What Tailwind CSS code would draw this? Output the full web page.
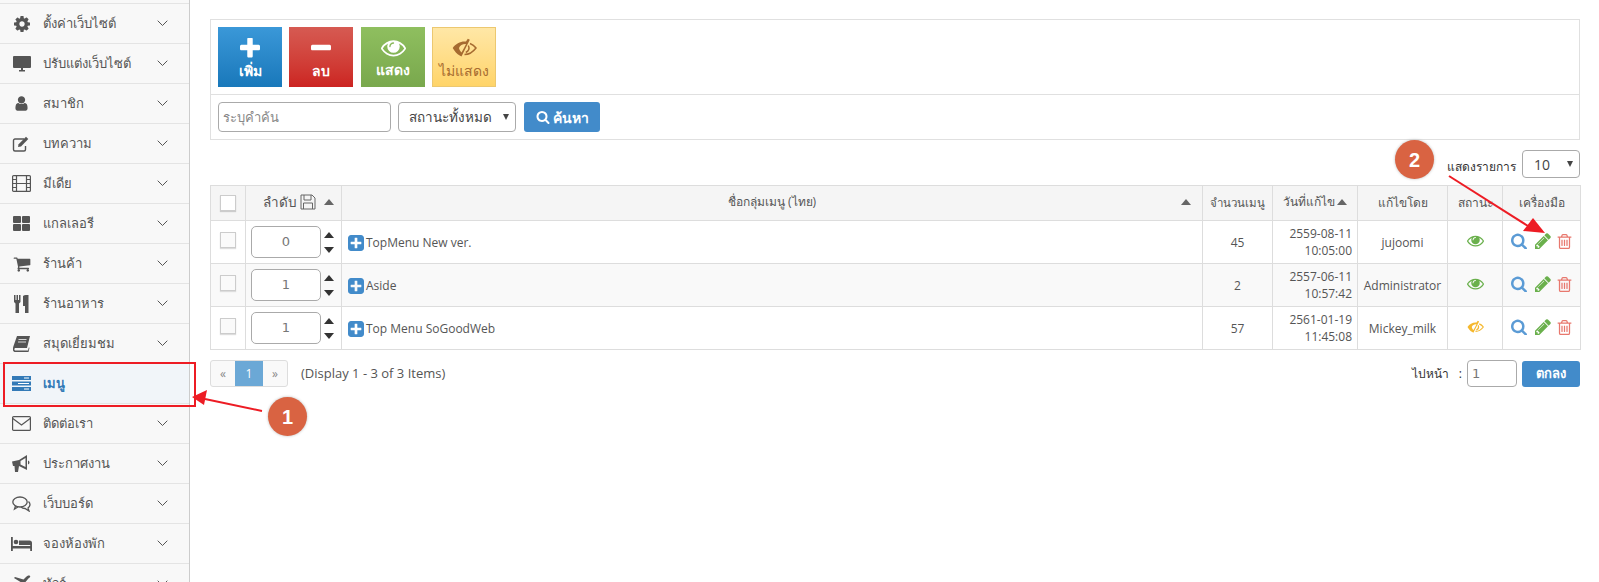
<!doctype html>
<html>
<head>
  <meta charset="UTF-8">
  <script src="https://cdn.jsdelivr.net/npm/@tailwindcss/browser@4"></script>
</head>
<body class="bg-white">
<div class="relative flex h-[582px] w-[1599px] overflow-hidden font-['Open_Sans','Noto_Sans',sans-serif] text-[12px] text-[#555]">

  <!-- Sidebar -->
  <aside class="w-[190px] shrink-0 h-full bg-[#f8f8f8] border-r border-[#ccc] pt-[3px] text-[13px]">
    <div class="flex h-[40px] items-center border-t border-[#e4e4e4]">
      <span class="w-[43px] flex justify-center pl-[1px]"><svg class="w-[16px] h-[16px] fill-[#555]" viewBox="128 128 1536 1536"><path d="M1152 896q0-106-75-181t-181-75-181 75-75 181 75 181 181 75 181-75 75-181zm512-109v222q0 12-8 23t-20 13l-185 28q-19 54-39 91 35 50 107 138 10 12 10 25t-9 23q-27 37-99 108t-94 71q-12 0-26-9l-138-108q-44 23-91 38-16 136-29 186-7 28-36 28h-222q-14 0-24.500-8.500t-11.500-21.500l-28-184q-49-16-90-37l-141 107q-10 9-25 9-14 0-25-11-126-114-165-168-7-10-7-23 0-12 8-23 15-21 51-66.500t54-70.500q-27-50-41-99l-183-27q-13-2-21-12.500t-8-23.500v-222q0-12 8-23t19-13l186-28q14-46 39-92-40-57-107-138-10-12-10-24 0-10 9-23 26-36 98.500-107.500t94.500-71.500q13 0 26 10l138 107q44-23 91-38 16-136 29-186 7-28 36-28h222q14 0 24.500 8.500t11.500 21.500l28 184q49 16 90 37l142-107q9-9 24-9 13 0 25 10 129 119 165 170 7 8 7 22 0 12-8 23-15 21-51 66.500t-54 70.500q26 50 41 98l183 28q13 2 21 12.500t8 23.500z"/></svg></span>
      <span class="flex-1">ตั้งค่าเว็บไซต์</span>
      <svg class="w-[11px] h-[7px] mr-[21px] stroke-[#555] fill-none" viewBox="0 0 11 7"><path d="M.7.7 5.500 5.500 10.300.7"/></svg>
    </div>
    <div class="flex h-[40px] items-center border-t border-[#e4e4e4]">
      <span class="w-[43px] flex justify-center"><svg class="w-[20px] h-[17px]" viewBox="0 0 20 17"><rect x="1" y="1" width="18" height="12" rx="1" fill="#555"/><path d="M7 15h6v1.500H7z M9 13h2v2H9z" fill="#555"/></svg></span>
      <span class="flex-1">ปรับแต่งเว็บไซต์</span>
      <svg class="w-[11px] h-[7px] mr-[21px] stroke-[#555] fill-none" viewBox="0 0 11 7"><path d="M.7.7 5.500 5.500 10.300.7"/></svg>
    </div>
    <div class="flex h-[40px] items-center border-t border-[#e4e4e4]">
      <span class="w-[43px] flex justify-center"><svg class="w-[17px] h-[17px] fill-[#555]" viewBox="0 0 1792 1792"><path d="M1536 1399q0 109-62.500 187t-150.500 78h-854q-88 0-150.500-78t-62.500-187q0-85 8.500-160.500t31.500-152 58.500-131 94-89 134.500-34.500q131 128 313 128t313-128q76 0 134.500 34.500t94 89 58.500 131 31.500 152 8.500 160.500zm-256-887q0 159-112.500 271.500t-271.500 112.500-271.500-112.500-112.500-271.500 112.500-271.500 271.500-112.500 271.500 112.500 112.500 271.500z"/></svg></span>
      <span class="flex-1">สมาชิก</span>
      <svg class="w-[11px] h-[7px] mr-[21px] stroke-[#555] fill-none" viewBox="0 0 11 7"><path d="M.7.7 5.500 5.500 10.300.7"/></svg>
    </div>
    <div class="flex h-[40px] items-center border-t border-[#e4e4e4]">
      <span class="w-[43px] flex justify-center"><svg class="w-[19px] h-[16px]" viewBox="0 0 19 16"><path d="M12 3H3a1.500 1.500 0 0 0-1.500 1.500v9A1.500 1.500 0 0 0 3 15h9a1.500 1.500 0 0 0 1.500-1.500V10" fill="none" stroke="#555" stroke-width="1.400"/><path d="M6 11l.6-2.800L14 .8l2.300 2.300L9 10.500z" fill="#555"/></svg></span>
      <span class="flex-1">บทความ</span>
      <svg class="w-[11px] h-[7px] mr-[21px] stroke-[#555] fill-none" viewBox="0 0 11 7"><path d="M.7.7 5.500 5.500 10.300.7"/></svg>
    </div>
    <div class="flex h-[40px] items-center border-t border-[#e4e4e4]">
      <span class="w-[43px] flex justify-center"><svg class="w-[19px] h-[17px]" viewBox="0 0 19 17"><rect x=".6" y=".6" width="17.800" height="15.800" rx="1" fill="none" stroke="#555" stroke-width="1.200"/><path d="M4.500 .6v15.800M14.500 .6v15.800M.6 4.500h3.900M.6 8.500h3.900M.6 12.500h3.900M14.500 4.500h3.900M14.500 8.500h3.900M14.500 12.500h3.900M4.500 8.500h10" stroke="#555" stroke-width="1.200" fill="none"/></svg></span>
      <span class="flex-1">มีเดีย</span>
      <svg class="w-[11px] h-[7px] mr-[21px] stroke-[#555] fill-none" viewBox="0 0 11 7"><path d="M.7.7 5.500 5.500 10.300.7"/></svg>
    </div>
    <div class="flex h-[40px] items-center border-t border-[#e4e4e4]">
      <span class="w-[43px] flex justify-center"><svg class="w-[17px] h-[15px]" viewBox="0 0 17 15" fill="#555"><rect width="8" height="7" rx="1"/><rect x="9" width="8" height="7" rx="1"/><rect y="8" width="8" height="7" rx="1"/><rect x="9" y="8" width="8" height="7" rx="1"/></svg></span>
      <span class="flex-1">แกลเลอรี</span>
      <svg class="w-[11px] h-[7px] mr-[21px] stroke-[#555] fill-none" viewBox="0 0 11 7"><path d="M.7.7 5.500 5.500 10.300.7"/></svg>
    </div>
    <div class="flex h-[40px] items-center border-t border-[#e4e4e4]">
      <span class="w-[43px] flex justify-center"><svg class="w-[18px] h-[18px] fill-[#555]" viewBox="0 0 1792 1792"><path d="M704 1536q0 52-38 90t-90 38-90-38-38-90 38-90 90-38 90 38 38 90zm896 0q0 52-38 90t-90 38-90-38-38-90 38-90 90-38 90 38 38 90zm128-1088v512q0 24-16.500 42.500t-40.500 21.500l-1044 122q13 60 13 70 0 16-24 64h920q26 0 45 19t19 45-19 45-45 19h-1024q-26 0-45-19t-19-45q0-11 8-31.500t16-36 21.500-40 15.500-29.500l-177-823h-204q-26 0-45-19t-19-45 19-45 45-19h256q16 0 28.500 6.500t19.500 15.500 13 24.500 8 26 5.500 29.500 4.500 26h1201q26 0 45 19t19 45z"/></svg></span>
      <span class="flex-1">ร้านค้า</span>
      <svg class="w-[11px] h-[7px] mr-[21px] stroke-[#555] fill-none" viewBox="0 0 11 7"><path d="M.7.7 5.500 5.500 10.300.7"/></svg>
    </div>
    <div class="flex h-[40px] items-center border-t border-[#e4e4e4]">
      <span class="w-[43px] flex justify-center"><svg class="w-[15px] h-[18px]" viewBox="0 0 15 18" fill="#555"><path d="M0 0h1.500v5h1V0h1.500v5h1V0H6.500v7L5 8.500V18H1.500V8.500L0 7z"/><path d="M9 1c2-1.500 5.500-1 5.500-1v18H11v-7H9z"/></svg></span>
      <span class="flex-1">ร้านอาหาร</span>
      <svg class="w-[11px] h-[7px] mr-[21px] stroke-[#555] fill-none" viewBox="0 0 11 7"><path d="M.7.7 5.500 5.500 10.300.7"/></svg>
    </div>
    <div class="flex h-[40px] items-center border-t border-[#e4e4e4]">
      <span class="w-[43px] flex justify-center"><svg class="w-[18px] h-[16px]" viewBox="0 0 18 16"><path d="M4 0h13l-3 12H2.500C1 12 1 14.500 2.500 14.500H15l.8-3 .7.300-1 4.200H2.500C-.500 16-.500 13 .5 10z" fill="#555"/><path d="M5.500 3.500h8M5 6h8" stroke="#f8f8f8" stroke-width=".8"/></svg></span>
      <span class="flex-1">สมุดเยี่ยมชม</span>
      <svg class="w-[11px] h-[7px] mr-[21px] stroke-[#555] fill-none" viewBox="0 0 11 7"><path d="M.7.7 5.500 5.500 10.300.7"/></svg>
    </div>
    <div class="flex h-[40px] items-center border-t border-[#e4e4e4] bg-[#f1f5f9] text-[#337ab7] font-bold">
      <span class="w-[43px] flex justify-center"><svg class="w-[19px] h-[15px]" viewBox="0 0 19 15" fill="#337ab7"><rect width="19" height="4"/><rect y="5.500" width="19" height="4"/><rect y="11" width="19" height="4"/><path d="M12 1.500h5v1h-5zM6 7h11v1H6zM12 12.500h5v1h-5z" fill="#fff"/></svg></span>
      <span class="flex-1">เมนู</span>
    </div>
    <div class="flex h-[40px] items-center border-t border-[#e4e4e4]">
      <span class="w-[43px] flex justify-center"><svg class="w-[19px] h-[15px]" viewBox="0 0 19 15" fill="none" stroke="#555" stroke-width="1.200"><rect x=".6" y=".6" width="17.800" height="13.800" rx="1"/><path d="M.8 2.500 9.500 9l8.700-6.500"/></svg></span>
      <span class="flex-1">ติดต่อเรา</span>
      <svg class="w-[11px] h-[7px] mr-[21px] stroke-[#555] fill-none" viewBox="0 0 11 7"><path d="M.7.7 5.500 5.500 10.300.7"/></svg>
    </div>
    <div class="flex h-[40px] items-center border-t border-[#e4e4e4]">
      <span class="w-[43px] flex justify-center"><svg class="w-[19px] h-[17px]" viewBox="0 0 19 17" fill="#555"><path d="M0 6.500 7 5l8-5v15l-8-4-1 6H3l-.5-6H1z"/><path d="M13.500 3 8.500 6v3.500l5 2.500z" fill="#f8f8f8"/><path d="M16 5.500c2 .8 2 3.200 0 4z"/></svg></span>
      <span class="flex-1">ประกาศงาน</span>
      <svg class="w-[11px] h-[7px] mr-[21px] stroke-[#555] fill-none" viewBox="0 0 11 7"><path d="M.7.7 5.500 5.500 10.300.7"/></svg>
    </div>
    <div class="flex h-[40px] items-center border-t border-[#e4e4e4]">
      <span class="w-[43px] flex justify-center"><svg class="w-[19px] h-[16px]" viewBox="0 0 19 16" fill="none" stroke="#555" stroke-width="1.300"><ellipse cx="8" cy="6" rx="7.200" ry="5"/><path d="M3.500 10 2.500 13l3.500-2M16.500 5.500c2.500 2.500 1.500 5-.5 6.500l1 3-4-2.500c-1.500 0-3-.5-4-1.500" /></svg></span>
      <span class="flex-1">เว็บบอร์ด</span>
      <svg class="w-[11px] h-[7px] mr-[21px] stroke-[#555] fill-none" viewBox="0 0 11 7"><path d="M.7.7 5.500 5.500 10.300.7"/></svg>
    </div>
    <div class="flex h-[40px] items-center border-t border-[#e4e4e4]">
      <span class="w-[43px] flex justify-center"><svg class="w-[21px] h-[14px]" viewBox="0 0 21 14" fill="#555"><rect width="1.800" height="14"/><rect x="19.200" y="6" width="1.800" height="8"/><rect y="9" width="21" height="2.500"/><circle cx="5" cy="5" r="2.300"/><path d="M8 3.500h10.500a2.500 2.500 0 0 1 2.500 2.500v2H8z"/></svg></span>
      <span class="flex-1">จองห้องพัก</span>
      <svg class="w-[11px] h-[7px] mr-[21px] stroke-[#555] fill-none" viewBox="0 0 11 7"><path d="M.7.7 5.500 5.500 10.300.7"/></svg>
    </div>
    <div class="flex h-[40px] items-center border-t border-[#e4e4e4]">
      <span class="w-[43px] flex justify-center"><svg class="w-[18px] h-[18px]" viewBox="0 0 18 18" fill="#555"><path d="M17 1c-1-1-3 0-4 1l-2.500 2.500L2 2 1 3l6.500 4L4.500 10H2l-1 1 3 2 2 3 1-1v-2.500L10 10l4 6.500 1-1-2.500-8.500L15 4c1-1 3-2 2-3z"/></svg></span>
      <span class="flex-1">ทัวร์</span>
      <svg class="w-[11px] h-[7px] mr-[21px] stroke-[#555] fill-none" viewBox="0 0 11 7"><path d="M.7.7 5.500 5.500 10.300.7"/></svg>
    </div>
  </aside>

  <!-- Main -->
  <main class="w-[1370px] ml-[20px] pt-[19px]">
    <section class="border border-[#e0e0e0]">
      <div class="flex px-[7px] py-[7px] h-[75px] border-b border-[#e0e0e0]">
        <button class="w-[64px] h-[60px] flex flex-col items-center text-white font-bold text-[14px] bg-gradient-to-b from-[#3a98d8] to-[#1878ba]">
          <svg class="w-[20px] h-[20px] mt-[11px] fill-white" viewBox="192 160 1408 1408"><path d="M1600 736v192q0 40-28 68t-68 28h-416v416q0 40-28 68t-68 28h-192q-40 0-68-28t-28-68v-416h-416q-40 0-68-28t-28-68v-192q0-40 28-68t68-28h416v-416q0-40 28-68t68-28h192q40 0 68 28t28 68v416h416q40 0 68 28t28 68z"/></svg>
          <span class="mt-[2px]">เพิ่ม</span>
        </button>
        <button class="ml-[7px] w-[64px] h-[60px] flex flex-col items-center text-white font-bold text-[14px] bg-gradient-to-b from-[#d65a52] to-[#cc2321]">
          <svg class="w-[20px] h-[20px] mt-[11px] fill-white" viewBox="192 160 1408 1408"><path d="M1600 736v192q0 40-28 68t-68 28h-1216q-40 0-68-28t-28-68v-192q0-40 28-68t68-28h1216q40 0 68 28t28 68z"/></svg>
          <span class="mt-[2px]">ลบ</span>
        </button>
        <button class="ml-[8px] w-[64px] h-[60px] flex flex-col items-center text-white font-bold text-[14px] bg-gradient-to-b from-[#8fbf5f] to-[#79a84d]">
          <svg class="w-[25px] h-[25px] mt-[8px] fill-white" viewBox="0 0 1792 1792"><path d="M1664 960q-152-236-381-353 61 104 61 225 0 185-131.500 316.500t-316.500 131.500-316.500-131.500-131.500-316.500q0-121 61-225-229 117-381 353 133 205 333.500 326.500t434.500 121.500 434.500-121.500 333.500-326.500zm-720-384q0-20-14-34t-34-14q-125 0-214.500 89.500t-89.500 214.500q0 20 14 34t34 14 34-14 14-34q0-86 61-147t147-61q20 0 34-14t14-34zm848 384q0 34-20 69-140 230-376.500 368.500t-499.500 138.500-499.500-139-376.500-368q-20-35-20-69t20-69q140-229 376.500-368t499.500-139 499.500 139 376.500 368q20 35 20 69z"/></svg>
          <span class="mt-[-1px]">แสดง</span>
        </button>
        <button class="ml-[7px] w-[64px] h-[60px] flex flex-col items-center text-[#a66b30] text-[14px] font-medium border border-[#ecc870] bg-gradient-to-b from-[#ffe7a6] to-[#ffd468]">
          <svg class="w-[25px] h-[20px] mt-[10px]" viewBox="0 0 25 20" fill="none" stroke="#a66b30"><path d="M.7 10C3.500 6 8 3.500 12.500 3.500H14L15.800 .8l2 1L9.500 18.500l-1.800-1C5 16.500 2.500 13 .7 10zM7 10c.5 2 1.300 3.300 2.500 4.500L12 10 14 6c-3-.3-6 1.300-7 4z" fill="#a66b30" fill-rule="evenodd" stroke="none"/><path d="M18 5.500c2.500 1 4.700 2.800 6 4.500-3 4-7 6.500-11.500 6.500M16.300 7.500c1.500 3 .5 5.500-2.500 7" stroke-width="1.500"/></svg>
          <span class="mt-[2px]">ไม่แสดง</span>
        </button>
      </div>
      <div class="flex items-center h-[44px] px-[7px]">
        <input class="w-[173px] h-[30px] px-[4px] border border-[#aaa] rounded-[4px] text-[13px] placeholder:text-[#888]" placeholder="ระบุคำค้น">
        <div class="relative w-[118px] h-[30px] ml-[7px] border border-[#aaa] rounded-[4px] flex items-center pl-[10px] text-[13.500px] text-[#444]">สถานะทั้งหมด<span class="absolute right-[6px] top-[11px] w-0 h-0 border-x-[3.500px] border-x-transparent border-t-[6px] border-t-[#444]"></span></div>
        <button class="ml-[8px] w-[76px] h-[30px] rounded-[3px] bg-[#428bca] text-white font-bold text-[14px] flex items-center justify-center gap-[3px]">
          <svg class="w-[14px] h-[14px] fill-white" viewBox="0 0 1792 1792"><path d="M1216 832q0-185-131.500-316.500t-316.500-131.500-316.500 131.500-131.500 316.500 131.500 316.500 316.500 131.500 316.500-131.500 131.500-316.500zm512 832q0 52-38 90t-90 38q-54 0-90-38l-343-342q-179 124-399 124-143 0-273.500-55.500t-225-150-150-225-55.500-273.500 55.500-273.500 150-225 225-150 273.500-55.500 273.500 55.500 225 150 150 225 55.500 273.500q0 220-124 399l343 343q37 37 37 90z"/></svg>ค้นหา
        </button>
      </div>
    </section>

    <div class="flex justify-end items-center h-[45px] pt-[10px] pb-[7px]">
      <span class="text-[12px] text-[#333] mr-[6px] mt-[5px]">แสดงรายการ</span>
      <div class="relative w-[58px] h-[28px] border border-[#aaa] rounded-[4px] flex items-center pl-[11px] text-[14px] text-[#444]">10<span class="absolute right-[6px] top-[10px] w-0 h-0 border-x-[3.500px] border-x-transparent border-t-[6px] border-t-[#444]"></span></div>
    </div>

    <table class="table-fixed w-[1370px] border-collapse border border-[#ddd]">
      <colgroup><col class="w-[35px]"><col class="w-[96px]"><col class="w-[861px]"><col class="w-[70px]"><col class="w-[85px]"><col class="w-[90px]"><col class="w-[55px]"><col class="w-[78px]"></colgroup>
      <thead class="bg-[#f5f5f5]">
        <tr class="h-[35px]">
          <th class="border border-[#ddd] font-medium"><span class="block w-[16px] h-[16px] mx-auto border border-[#ccc] bg-white shadow-[0_1px_1px_#ccc]"></span></th>
          <th class="border border-[#ddd] font-medium">
            <div class="flex items-center pl-[17px] pb-[2px] text-[13.500px]">ลำดับ<svg class="ml-[3px] w-[16px] h-[16px]" viewBox="0 0 16 16" fill="none" stroke="#666"><path d="M1 1h11l3 3v11H1zM4 1v5h7V1M3.500 15V9h9v6"/></svg><span class="ml-[8px] w-0 h-0 border-x-[5.500px] border-x-transparent border-b-[6px] border-b-[#666]"></span></div>
          </th>
          <th class="relative border border-[#ddd] font-medium"><span class="pb-[2px] block">ชื่อกลุ่มเมนู (ไทย)</span><span class="absolute right-[11px] top-[13px] w-0 h-0 border-x-[5.500px] border-x-transparent border-b-[6px] border-b-[#666]"></span></th>
          <th class="border border-[#ddd] font-medium text-[11.500px]">จำนวนเมนู</th>
          <th class="border border-[#ddd] font-medium"><div class="flex items-center justify-center gap-[2px] pb-[3px]">วันที่แก้ไข<span class="w-0 h-0 border-x-[5.500px] border-x-transparent border-b-[6px] border-b-[#666]"></span></div></th>
          <th class="border border-[#ddd] font-medium">แก้ไขโดย</th>
          <th class="border border-[#ddd] font-medium">สถานะ</th>
          <th class="border border-[#ddd] font-medium">เครื่องมือ</th>
        </tr>
      </thead>
      <tbody class="text-center">
        <tr class="h-[43px]">
          <td class="border border-[#ddd]"><span class="block w-[16px] h-[16px] mx-auto mb-[4px] border border-[#ccc] bg-[#fafafa] shadow-[0_1px_1px_#ddd]"></span></td>
          <td class="border border-[#ddd]"><div class="flex items-center pl-[5px]"><span class="w-[70px] h-[32px] border border-[#aaa] rounded-[5px] flex items-center justify-center text-[13px] font-['DejaVu_Sans',sans-serif] text-[#777]">0</span><span class="ml-[3px] flex flex-col gap-[9px]"><span class="w-0 h-0 border-x-[5.500px] border-x-transparent border-b-[6px] border-b-[#333]"></span><span class="w-0 h-0 border-x-[5.500px] border-x-transparent border-t-[6px] border-t-[#333]"></span></span></div></td>
          <td class="border border-[#ddd] text-left pl-[6px]"><div class="flex items-center gap-[2px] pt-[2px]"><svg class="w-[16px] h-[16px] fill-[#428bca]" viewBox="128 128 1536 1536"><path d="M1408 960v-128q0-26-19-45t-45-19h-320v-320q0-26-19-45t-45-19h-128q-26 0-45 19t-19 45v320h-320q-26 0-45 19t-19 45v128q0 26 19 45t45 19h320v320q0 26 19 45t45 19h128q26 0 45-19t19-45v-320h320q26 0 45-19t19-45zm256-544v960q0 119-84.500 203.500t-203.500 84.500h-960q-119 0-203.500-84.500t-84.500-203.500v-960q0-119 84.500-203.500t203.500-84.500h960q119 0 203.500 84.500t84.500 203.500z"/></svg>TopMenu New ver.</div></td>
          <td class="border border-[#ddd] pt-[2px]">45</td>
          <td class="border border-[#ddd] text-right pr-[5px] leading-[17px]">2559-08-11<br>10:05:00</td>
          <td class="border border-[#ddd] pt-[2px]">jujoomi</td>
          <td class="border border-[#ddd]"><svg class="w-[17px] h-[17px] mx-auto mb-[3px] fill-[#6ab04c]" viewBox="0 0 1792 1792"><path d="M1664 960q-152-236-381-353 61 104 61 225 0 185-131.500 316.500t-316.500 131.500-316.500-131.500-131.500-316.500q0-121 61-225-229 117-381 353 133 205 333.500 326.500t434.500 121.500 434.500-121.500 333.500-326.500zm-720-384q0-20-14-34t-34-14q-125 0-214.500 89.500t-89.500 214.500q0 20 14 34t34 14 34-14 14-34q0-86 61-147t147-61q20 0 34-14t14-34zm848 384q0 34-20 69-140 230-376.500 368.500t-499.500 138.500-499.500-139-376.500-368q-20-35-20-69t20-69q140-229 376.500-368t499.500-139 499.500 139 376.500 368q20 35 20 69z"/></svg></td>
          <td class="border border-[#ddd]"><div class="flex items-center pl-[8px] pb-[2px]">
            <svg class="w-[16px] h-[16px] fill-[#5b9bd5]" viewBox="64 64 1664 1664"><path d="M1216 832q0-185-131.500-316.500t-316.500-131.500-316.500 131.500-131.500 316.500 131.500 316.500 316.500 131.500 316.500-131.500 131.500-316.500zm512 832q0 52-38 90t-90 38q-54 0-90-38l-343-342q-179 124-399 124-143 0-273.500-55.500t-225-150-150-225-55.500-273.500 55.500-273.500 150-225 225-150 273.500-55.500 273.500 55.500 225 150 150 225 55.500 273.500q0 220-124 399l343 343q37 37 37 90z"/></svg>
            <svg class="ml-[8px] w-[16px] h-[16px] fill-[#6ab04c]" viewBox="128 128 1536 1536"><path d="M491 1536l91-91-235-235-91 91v107h128v128h107zm523-928q0-22-22-22-10 0-17 7l-542 542q-7 7-7 17 0 22 22 22 10 0 17-7l542-542q7-7 7-17zm-54-192l416 416-832 832h-416v-416zm683 96q0 53-37 90l-166 166-416-416 166-165q36-38 90-38 53 0 91 38l235 234q37 39 37 91z"/></svg>
            <svg class="ml-[6px] w-[15px] h-[15px] fill-[#e8786e]" viewBox="128 128 1536 1536"><path d="M704 736v576q0 14-9 23t-23 9h-64q-14 0-23-9t-9-23v-576q0-14 9-23t23-9h64q14 0 23 9t9 23zm256 0v576q0 14-9 23t-23 9h-64q-14 0-23-9t-9-23v-576q0-14 9-23t23-9h64q14 0 23 9t9 23zm256 0v576q0 14-9 23t-23 9h-64q-14 0-23-9t-9-23v-576q0-14 9-23t23-9h64q14 0 23 9t9 23zm128 724v-948h-896v948q0 22 7 40.500t14.500 27 10.500 8.500h832q3 0 10.500-8.500t14.500-27 7-40.500zm-672-1076h448l-48-117q-7-9-17-11h-317q-10 2-17 11zm928 32v64q0 14-9 23t-23 9h-96v948q0 83-47 143.500t-113 60.500h-832q-66 0-113-58.500t-47-141.500v-952h-96q-14 0-23-9t-9-23v-64q0-14 9-23t23-9h309l70-167q15-37 54-63t79-26h320q40 0 79 26t54 63l70 167h309q14 0 23 9t9 23z"/></svg>
          </div></td>
        </tr>
        <tr class="h-[43px] bg-[#f9f9f9]">
          <td class="border border-[#ddd]"><span class="block w-[16px] h-[16px] mx-auto mb-[4px] border border-[#ccc] bg-[#fafafa] shadow-[0_1px_1px_#ddd]"></span></td>
          <td class="border border-[#ddd]"><div class="flex items-center pl-[5px]"><span class="w-[70px] h-[32px] border border-[#aaa] rounded-[5px] bg-white flex items-center justify-center text-[13px] font-['DejaVu_Sans',sans-serif] text-[#777]">1</span><span class="ml-[3px] flex flex-col gap-[9px]"><span class="w-0 h-0 border-x-[5.500px] border-x-transparent border-b-[6px] border-b-[#333]"></span><span class="w-0 h-0 border-x-[5.500px] border-x-transparent border-t-[6px] border-t-[#333]"></span></span></div></td>
          <td class="border border-[#ddd] text-left pl-[6px]"><div class="flex items-center gap-[2px] pt-[2px]"><svg class="w-[16px] h-[16px] fill-[#428bca]" viewBox="128 128 1536 1536"><path d="M1408 960v-128q0-26-19-45t-45-19h-320v-320q0-26-19-45t-45-19h-128q-26 0-45 19t-19 45v320h-320q-26 0-45 19t-19 45v128q0 26 19 45t45 19h320v320q0 26 19 45t45 19h128q26 0 45-19t19-45v-320h320q26 0 45-19t19-45zm256-544v960q0 119-84.500 203.500t-203.500 84.500h-960q-119 0-203.500-84.500t-84.500-203.500v-960q0-119 84.500-203.500t203.500-84.500h960q119 0 203.500 84.500t84.500 203.500z"/></svg>Aside</div></td>
          <td class="border border-[#ddd] pt-[2px]">2</td>
          <td class="border border-[#ddd] text-right pr-[5px] leading-[17px]">2557-06-11<br>10:57:42</td>
          <td class="border border-[#ddd] pt-[2px]">Administrator</td>
          <td class="border border-[#ddd]"><svg class="w-[17px] h-[17px] mx-auto mb-[3px] fill-[#6ab04c]" viewBox="0 0 1792 1792"><path d="M1664 960q-152-236-381-353 61 104 61 225 0 185-131.500 316.500t-316.500 131.500-316.500-131.500-131.500-316.500q0-121 61-225-229 117-381 353 133 205 333.500 326.500t434.500 121.500 434.500-121.500 333.500-326.500zm-720-384q0-20-14-34t-34-14q-125 0-214.500 89.500t-89.500 214.500q0 20 14 34t34 14 34-14 14-34q0-86 61-147t147-61q20 0 34-14t14-34zm848 384q0 34-20 69-140 230-376.500 368.500t-499.500 138.500-499.500-139-376.500-368q-20-35-20-69t20-69q140-229 376.500-368t499.500-139 499.500 139 376.500 368q20 35 20 69z"/></svg></td>
          <td class="border border-[#ddd]"><div class="flex items-center pl-[8px] pb-[2px]">
            <svg class="w-[16px] h-[16px] fill-[#5b9bd5]" viewBox="64 64 1664 1664"><path d="M1216 832q0-185-131.500-316.500t-316.500-131.500-316.500 131.500-131.500 316.500 131.500 316.500 316.500 131.500 316.500-131.500 131.500-316.500zm512 832q0 52-38 90t-90 38q-54 0-90-38l-343-342q-179 124-399 124-143 0-273.500-55.500t-225-150-150-225-55.500-273.500 55.500-273.500 150-225 225-150 273.500-55.500 273.500 55.500 225 150 150 225 55.500 273.500q0 220-124 399l343 343q37 37 37 90z"/></svg>
            <svg class="ml-[8px] w-[16px] h-[16px] fill-[#6ab04c]" viewBox="128 128 1536 1536"><path d="M491 1536l91-91-235-235-91 91v107h128v128h107zm523-928q0-22-22-22-10 0-17 7l-542 542q-7 7-7 17 0 22 22 22 10 0 17-7l542-542q7-7 7-17zm-54-192l416 416-832 832h-416v-416zm683 96q0 53-37 90l-166 166-416-416 166-165q36-38 90-38 53 0 91 38l235 234q37 39 37 91z"/></svg>
            <svg class="ml-[6px] w-[15px] h-[15px] fill-[#e8786e]" viewBox="128 128 1536 1536"><path d="M704 736v576q0 14-9 23t-23 9h-64q-14 0-23-9t-9-23v-576q0-14 9-23t23-9h64q14 0 23 9t9 23zm256 0v576q0 14-9 23t-23 9h-64q-14 0-23-9t-9-23v-576q0-14 9-23t23-9h64q14 0 23 9t9 23zm256 0v576q0 14-9 23t-23 9h-64q-14 0-23-9t-9-23v-576q0-14 9-23t23-9h64q14 0 23 9t9 23zm128 724v-948h-896v948q0 22 7 40.500t14.500 27 10.500 8.500h832q3 0 10.500-8.500t14.500-27 7-40.500zm-672-1076h448l-48-117q-7-9-17-11h-317q-10 2-17 11zm928 32v64q0 14-9 23t-23 9h-96v948q0 83-47 143.500t-113 60.500h-832q-66 0-113-58.500t-47-141.500v-952h-96q-14 0-23-9t-9-23v-64q0-14 9-23t23-9h309l70-167q15-37 54-63t79-26h320q40 0 79 26t54 63l70 167h309q14 0 23 9t9 23z"/></svg>
          </div></td>
        </tr>
        <tr class="h-[43px]">
          <td class="border border-[#ddd]"><span class="block w-[16px] h-[16px] mx-auto mb-[4px] border border-[#ccc] bg-[#fafafa] shadow-[0_1px_1px_#ddd]"></span></td>
          <td class="border border-[#ddd]"><div class="flex items-center pl-[5px]"><span class="w-[70px] h-[32px] border border-[#aaa] rounded-[5px] flex items-center justify-center text-[13px] font-['DejaVu_Sans',sans-serif] text-[#777]">1</span><span class="ml-[3px] flex flex-col gap-[9px]"><span class="w-0 h-0 border-x-[5.500px] border-x-transparent border-b-[6px] border-b-[#333]"></span><span class="w-0 h-0 border-x-[5.500px] border-x-transparent border-t-[6px] border-t-[#333]"></span></span></div></td>
          <td class="border border-[#ddd] text-left pl-[6px]"><div class="flex items-center gap-[2px] pt-[2px]"><svg class="w-[16px] h-[16px] fill-[#428bca]" viewBox="128 128 1536 1536"><path d="M1408 960v-128q0-26-19-45t-45-19h-320v-320q0-26-19-45t-45-19h-128q-26 0-45 19t-19 45v320h-320q-26 0-45 19t-19 45v128q0 26 19 45t45 19h320v320q0 26 19 45t45 19h128q26 0 45-19t19-45v-320h320q26 0 45-19t19-45zm256-544v960q0 119-84.500 203.500t-203.500 84.500h-960q-119 0-203.500-84.500t-84.500-203.500v-960q0-119 84.500-203.500t203.500-84.500h960q119 0 203.500 84.500t84.500 203.500z"/></svg>Top Menu SoGoodWeb</div></td>
          <td class="border border-[#ddd] pt-[2px]">57</td>
          <td class="border border-[#ddd] text-right pr-[5px] leading-[17px]">2561-01-19<br>11:45:08</td>
          <td class="border border-[#ddd] pt-[2px]">Mickey_milk</td>
          <td class="border border-[#ddd]"><svg class="w-[17px] h-[14px] mx-auto mb-[3px]" viewBox="0 0 25 20" fill="none" stroke="#f5b82e"><path d="M.7 10C3.500 6 8 3.500 12.500 3.500H14L15.800 .8l2 1L9.500 18.500l-1.800-1C5 16.500 2.500 13 .7 10zM7 10c.5 2 1.300 3.300 2.500 4.500L12 10 14 6c-3-.3-6 1.300-7 4z" fill="#f5b82e" fill-rule="evenodd" stroke="none"/><path d="M18 5.500c2.500 1 4.700 2.800 6 4.500-3 4-7 6.500-11.500 6.500M16.300 7.500c1.500 3 .5 5.500-2.500 7" stroke-width="1.800"/></svg></td>
          <td class="border border-[#ddd]"><div class="flex items-center pl-[8px] pb-[2px]">
            <svg class="w-[16px] h-[16px] fill-[#5b9bd5]" viewBox="64 64 1664 1664"><path d="M1216 832q0-185-131.500-316.500t-316.500-131.500-316.500 131.500-131.500 316.500 131.500 316.500 316.500 131.500 316.500-131.500 131.500-316.500zm512 832q0 52-38 90t-90 38q-54 0-90-38l-343-342q-179 124-399 124-143 0-273.500-55.500t-225-150-150-225-55.500-273.500 55.500-273.500 150-225 225-150 273.500-55.500 273.500 55.500 225 150 150 225 55.500 273.500q0 220-124 399l343 343q37 37 37 90z"/></svg>
            <svg class="ml-[8px] w-[16px] h-[16px] fill-[#6ab04c]" viewBox="128 128 1536 1536"><path d="M491 1536l91-91-235-235-91 91v107h128v128h107zm523-928q0-22-22-22-10 0-17 7l-542 542q-7 7-7 17 0 22 22 22 10 0 17-7l542-542q7-7 7-17zm-54-192l416 416-832 832h-416v-416zm683 96q0 53-37 90l-166 166-416-416 166-165q36-38 90-38 53 0 91 38l235 234q37 39 37 91z"/></svg>
            <svg class="ml-[6px] w-[15px] h-[15px] fill-[#e8786e]" viewBox="128 128 1536 1536"><path d="M704 736v576q0 14-9 23t-23 9h-64q-14 0-23-9t-9-23v-576q0-14 9-23t23-9h64q14 0 23 9t9 23zm256 0v576q0 14-9 23t-23 9h-64q-14 0-23-9t-9-23v-576q0-14 9-23t23-9h64q14 0 23 9t9 23zm256 0v576q0 14-9 23t-23 9h-64q-14 0-23-9t-9-23v-576q0-14 9-23t23-9h64q14 0 23 9t9 23zm128 724v-948h-896v948q0 22 7 40.500t14.500 27 10.500 8.500h832q3 0 10.500-8.500t14.500-27 7-40.500zm-672-1076h448l-48-117q-7-9-17-11h-317q-10 2-17 11zm928 32v64q0 14-9 23t-23 9h-96v948q0 83-47 143.500t-113 60.500h-832q-66 0-113-58.500t-47-141.500v-952h-96q-14 0-23-9t-9-23v-64q0-14 9-23t23-9h309l70-167q15-37 54-63t79-26h320q40 0 79 26t54 63l70 167h309q14 0 23 9t9 23z"/></svg>
          </div></td>
        </tr>
      </tbody>
    </table>

    <div class="flex items-center justify-between mt-[10px] h-[27px]">
      <div class="flex items-center">
        <div class="flex h-[27px] border border-[#ddd] rounded-[3px] overflow-hidden text-[#888] bg-[#f9f9f9]">
          <span class="w-[24px] flex items-center justify-center">«</span>
          <span class="w-[28px] flex items-center justify-center bg-[#6ba8d6] text-white">1</span>
          <span class="w-[24px] flex items-center justify-center">»</span>
        </div>
        <span class="ml-[13px] text-[13px]">(Display 1 - 3 of 3 Items)</span>
      </div>
      <div class="flex items-center">
        <span class="font-medium text-[#333] mr-[5px]">ไปหน้า&nbsp;&nbsp;&nbsp;:</span>
        <span class="w-[50px] h-[27px] border border-[#aaa] rounded-[4px] flex items-center pl-[4px] text-[13px] font-['DejaVu_Sans',sans-serif] text-[#777]">1</span>
        <button class="ml-[5px] w-[58px] h-[26px] bg-[#428bca] rounded-[3px] text-white font-bold text-[13px]">ตกลง</button>
      </div>
    </div>
  </main>

  <!-- Annotations -->
  <span class="absolute left-[3px] top-[362px] w-[193px] h-[45px] border-2 border-[#ed1c24]"></span>
  <svg class="absolute left-0 top-0 w-[1599px] h-[582px] pointer-events-none" viewBox="0 0 1599 582">
    <path d="M262 411 205 399" stroke="#ed1c24" stroke-width="2" fill="none"/>
    <path d="M192 397 207 390 204 405z" fill="#ed1c24"/>
    <path d="M1449 176 1528 226" stroke="#ed1c24" stroke-width="2" fill="none"/>
    <path d="M1545 233 1523 231 1533 218z" fill="#ed1c24"/>
  </svg>
  <span class="absolute left-[268px] top-[397px] w-[39px] h-[39px] rounded-full bg-[#d96342] text-white font-bold text-[20px] flex items-center justify-center shadow-[0_0_3px_#bbb] font-['Liberation_Sans',sans-serif]">1</span>
  <span class="absolute left-[1395px] top-[140px] w-[39px] h-[39px] rounded-full bg-[#d96342] text-white font-bold text-[20px] flex items-center justify-center shadow-[0_0_3px_#bbb] font-['Liberation_Sans',sans-serif]">2</span>
</div>
</body>
</html>
